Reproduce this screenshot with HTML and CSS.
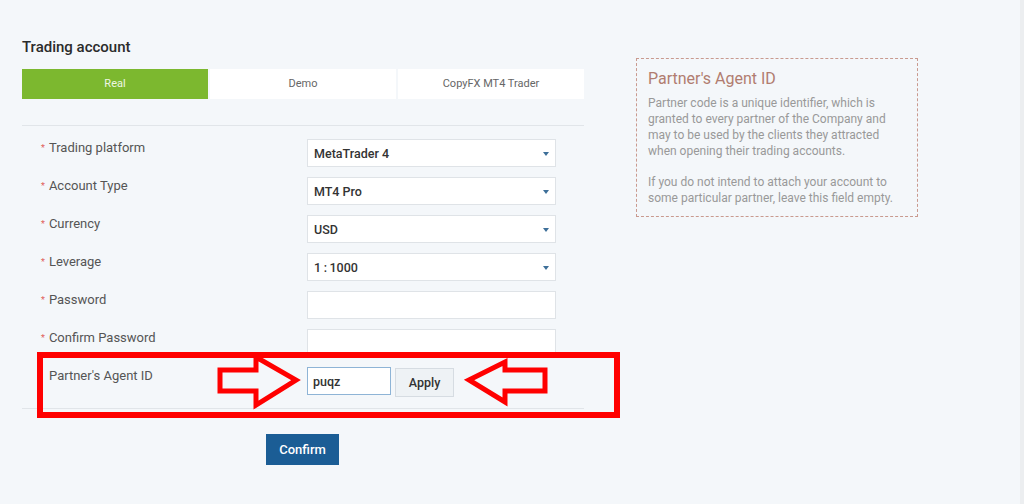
FILE: index.html
```html
<!DOCTYPE html>
<html>
<head>
<meta charset="utf-8">
<link rel="stylesheet" href="styles.css">
</head>
<body>
<div class="page">
  <div class="main">
    <h2 class="title">Trading account</h2>
    <div class="tabs">
      <div class="tab active">Real</div>
      <div class="tab">Demo</div>
      <div class="tab">CopyFX MT4 Trader</div>
    </div>
    <div class="form">
      <div class="row">
        <div class="label"><span class="req">*</span>Trading platform</div>
        <div class="select">MetaTrader 4<span class="caret"></span></div>
      </div>
      <div class="row">
        <div class="label"><span class="req">*</span>Account Type</div>
        <div class="select">MT4 Pro<span class="caret"></span></div>
      </div>
      <div class="row">
        <div class="label"><span class="req">*</span>Currency</div>
        <div class="select">USD<span class="caret"></span></div>
      </div>
      <div class="row">
        <div class="label"><span class="req">*</span>Leverage</div>
        <div class="select">1&thinsp;:&thinsp;1000<span class="caret"></span></div>
      </div>
      <div class="row">
        <div class="label"><span class="req">*</span>Password</div>
        <input class="field" type="password">
      </div>
      <div class="row">
        <div class="label"><span class="req">*</span>Confirm Password</div>
        <input class="field" type="password">
      </div>
      <div class="row partner">
        <div class="label plain">Partner's Agent ID</div>
        <div class="partner-ctrl">
          <input class="field small focus" type="text" value="puqz">
          <button class="apply">Apply</button>
        </div>
      </div>
    </div>
    <div class="actions">
      <button class="confirm">Confirm</button>
    </div>
  </div>
  <aside class="info">
    <h3 class="info-title">Partner's Agent ID</h3>
    <p>Partner code is a unique identifier, which is granted to every partner of the Company and may to be used by the clients they attracted when opening their trading accounts.</p>
    <p>If you do not intend to attach your account to some particular partner, leave this field empty.</p>
  </aside>
  <svg class="annot" width="1024" height="504" viewBox="0 0 1024 504">
    <rect x="40" y="355" width="577" height="60" fill="none" stroke="#ff0000" stroke-width="6"/>
    <polygon points="220,370 256,370 256,357 296,380 256,405 256,391 220,391" fill="none" stroke="#ff0000" stroke-width="5" stroke-linejoin="miter"/>
    <polygon points="469,380 505,362 505,370 545,370 545,391 505,391 505,402" fill="none" stroke="#ff0000" stroke-width="5" stroke-linejoin="miter"/>
  </svg>
</div>
</body>
</html>
```

FILE: styles.css
```css
* { box-sizing: border-box; }
html, body { margin: 0; padding: 0; }
body {
  background: #f4f7fa;
  font-family: Roboto, "Liberation Sans", sans-serif;
  color: #444;
}
.page {
  position: relative;
  width: 1024px;
  height: 504px;
  display: flex;
  align-items: flex-start;
  padding-left: 22px;
  border-right: 4px solid #eceef0;
  overflow: hidden;
}
.main {
  width: 562px;
  padding-top: 37px;
}
.title {
  margin: 0;
  font-size: 15px;
  line-height: 20px;
  font-weight: 500;
  color: #2b2b2b;
}
.tabs {
  margin-top: 12px;
  display: flex;
  gap: 2px;
}
.tab {
  flex: 1;
  height: 30px;
  line-height: 30px;
  text-align: center;
  background: #fff;
  font-size: 11px;
  color: #666;
}
.tab.active {
  background: #7cb82f;
  color: #eef6e2;
}
.form {
  margin-top: 26px;
  border-top: 1px solid #e1e5e9;
  border-bottom: 1px solid #e1e5e9;
  padding: 13px 0 13px;
  display: flex;
  flex-direction: column;
  gap: 10px;
}
.row {
  display: grid;
  grid-template-columns: 285px 249px;
  height: 28px;
}
.label {
  padding-left: 19px;
  padding-top: 1px;
  font-size: 13px;
  line-height: 16px;
  color: #555;
}
.label.plain { padding-left: 27px; }
.req {
  color: #e0605a;
  font-size: 9px;
  vertical-align: top;
  margin-right: 4px;
}
.select {
  position: relative;
  height: 28px;
  background: #fff;
  border: 1px solid #dfe3e7;
  padding-left: 6px;
  line-height: 27px;
  font-size: 12.5px;
  font-weight: 500;
  color: #333;
}
.caret {
  position: absolute;
  right: 6px;
  top: 12px;
  width: 0;
  height: 0;
  border-left: 3px solid transparent;
  border-right: 3px solid transparent;
  border-top: 4px solid #3d6f99;
}
.field {
  width: 249px;
  height: 28px;
  border: 1px solid #dfe3e7;
  background: #fff;
  margin: 0;
  padding: 0 6px;
  font-family: inherit;
  font-size: 12.5px;
  font-weight: 500;
  color: #333;
  outline: none;
}
.partner-ctrl {
  display: flex;
  gap: 4px;
}
.field.small {
  width: 84px;
  padding-left: 5px;
}
.field.focus { border-color: #8eb4d6; }
.apply {
  width: 59px;
  height: 29px;
  margin-top: 1px;
  background: #eef2f5;
  border: 1px solid #d6dce2;
  font-family: inherit;
  font-size: 12.5px;
  font-weight: 500;
  color: #333;
  padding: 0;
}
.actions {
  display: flex;
  justify-content: center;
  padding-top: 25px;
}
.confirm {
  width: 73px;
  height: 31px;
  margin-left: -1px;
  background: #1b5d95;
  border: none;
  color: #fff;
  font-family: inherit;
  font-size: 13px;
  font-weight: 500;
  padding: 0;
}
.info {
  margin-left: 52px;
  margin-top: 58px;
  width: 282px;
  border: 1px dashed #c99a8f;
  padding: 10px 11px 10px 11px;
  color: #999;
  font-size: 12px;
  line-height: 16px;
}
.info-title {
  margin: 0 0 6px;
  font-size: 16px;
  line-height: 20px;
  font-weight: 400;
  color: #b17d70;
}
.info p { margin: 0 0 15px; }
.info p:last-child { margin-bottom: 0; }
.annot {
  position: absolute;
  left: 0;
  top: 0;
  pointer-events: none;
}
```
